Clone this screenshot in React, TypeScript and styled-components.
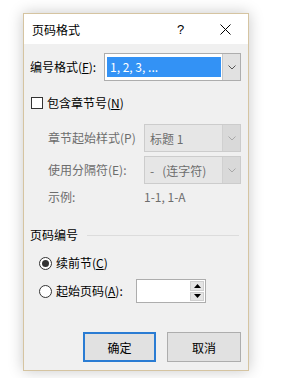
import React from "react";
import styled, { createGlobalStyle } from "styled-components";

const Global = createGlobalStyle`
  html, body { margin: 0; padding: 0; background: #ffffff; }
  body { font-family: "Noto Sans CJK SC", "Noto Sans", sans-serif; font-size: 12px; color: #000; }
  * { box-sizing: border-box; }
`;

const Page = styled.div`
  width: 282px;
  height: 378px;
  padding: 13px 0 0 23px;
`;

const Dialog = styled.div`
  width: 226px;
  height: 358px;
  border: 1px solid #d5c4a1;
  background: #f0f0f0;
  box-shadow: 0 0 14px rgba(0, 0, 0, 0.22);
  display: flex;
  flex-direction: column;
`;

const TitleBar = styled.div`
  height: 30px;
  background: #ffffff;
  display: flex;
  align-items: center;
  padding-left: 8px;
`;

const Title = styled.div`
  flex: 1;
  font-size: 12px;
  line-height: 16px;
  padding-top: 1px;
`;

const TitleButton = styled.div`
  width: 45px;
  height: 30px;
  display: flex;
  align-items: center;
  justify-content: center;
  font-size: 13px;
  font-family: "Liberation Sans", sans-serif;
`;

const Body = styled.div`
  flex: 1;
  display: flex;
  flex-direction: column;
  padding: 0 7px 0 6px;
`;

const Row = styled.div<{ $top: number; $indent?: number; $h?: number }>`
  display: flex;
  align-items: center;
  margin-top: ${(p) => p.$top}px;
  margin-left: ${(p) => p.$indent ?? 0}px;
  height: ${(p) => p.$h ?? 18}px;
`;

const Label = styled.div<{ $w?: number; $disabled?: boolean }>`
  width: ${(p) => (p.$w ? `${p.$w}px` : "auto")};
  flex-shrink: 0;
  color: ${(p) => (p.$disabled ? "#6d6d6d" : "#000")};
  line-height: 16px;
  white-space: nowrap;
`;

const Combo = styled.div<{ $w: number; $disabled?: boolean }>`
  width: ${(p) => p.$w}px;
  height: 28px;
  display: flex;
  border: 1px solid ${(p) => (p.$disabled ? "#cccccc" : "#adadad")};
  background: ${(p) => (p.$disabled ? "#e6e6e6" : "#ffffff")};
`;

const ComboText = styled.div<{ $disabled?: boolean }>`
  flex: 1;
  display: flex;
  align-items: center;
  padding-left: 5px;
  color: ${(p) => (p.$disabled ? "#6d6d6d" : "#000")};
`;

const Selected = styled.div`
  flex: 1;
  margin: 3px 1px 3px 2px;
  background: #3392f5;
  color: #ffffff;
  display: flex;
  align-items: center;
  padding-left: 3px;
  line-height: 16px;
`;

const ComboButton = styled.div<{ $disabled?: boolean }>`
  width: 18px;
  display: flex;
  align-items: center;
  justify-content: center;
  background: ${(p) => (p.$disabled ? "#d9d9d9" : "#e1e1e1")};
  border-left: 1px solid ${(p) => (p.$disabled ? "#d0d0d0" : "#c8c8c8")};
`;

const CheckBox = styled.div`
  width: 12px;
  height: 12px;
  border: 1px solid #333333;
  background: #ffffff;
  margin: 0 4px 0 1px;
`;

const Radio = styled.div<{ $on?: boolean }>`
  width: 13px;
  height: 13px;
  border-radius: 50%;
  border: 1px solid #333333;
  background: #ffffff;
  margin: 0 4px 0 9px;
  display: flex;
  align-items: center;
  justify-content: center;
  &::after {
    content: "";
    width: 7px;
    height: 7px;
    border-radius: 50%;
    background: ${(p) => (p.$on ? "#333333" : "transparent")};
  }
`;

const GroupHeader = styled.div`
  display: flex;
  align-items: center;
  margin-top: 20px;
  height: 18px;
`;

const GroupLine = styled.div`
  flex: 1;
  height: 1px;
  background: #dcdcdc;
  margin: 0 2px 0 9px;
`;

const Spin = styled.div`
  width: 70px;
  height: 24px;
  border: 1px solid #adadad;
  background: #ffffff;
  display: flex;
  justify-content: flex-end;
`;

const SpinButtons = styled.div`
  width: 16px;
  display: flex;
  flex-direction: column;
  padding: 1px;
  gap: 1px;
`;

const SpinBtn = styled.div`
  flex: 1;
  background: #e5e5e5;
  border: 1px solid #cfcfcf;
  display: flex;
  align-items: center;
  justify-content: center;
`;

const Buttons = styled.div`
  display: flex;
  justify-content: flex-end;
  gap: 11px;
  margin-top: 29px;
`;

const Button = styled.div<{ $primary?: boolean }>`
  width: ${(p) => (p.$primary ? 73 : 74)}px;
  height: 30px;
  background: #e1e1e1;
  border: ${(p) => (p.$primary ? "2px solid #2a7cd3" : "1px solid #adadad")};
  display: flex;
  align-items: center;
  justify-content: center;
`;

const Chevron = ({ color }: { color: string }) => (
  <svg width="8" height="5" viewBox="0 0 8 5">
    <path d="M0.5 0.5 L4 4 L7.5 0.5" fill="none" stroke={color} strokeWidth="1" />
  </svg>
);

const Tri = ({ up }: { up?: boolean }) => (
  <svg width="7" height="4" viewBox="0 0 7 4">
    <path d={up ? "M0 4 L3.5 0 L7 4 Z" : "M0 0 L3.5 4 L7 0 Z"} fill="#000" />
  </svg>
);

export default function App() {
  return (
    <>
      <Global />
      <Page>
        <Dialog>
          <TitleBar>
            <Title>页码格式</Title>
            <TitleButton>?</TitleButton>
            <TitleButton>
              <svg width="11" height="11" viewBox="0 0 11 11">
                <path d="M0.5 0.5 L10.5 10.5 M10.5 0.5 L0.5 10.5" stroke="#000" strokeWidth="1" />
              </svg>
            </TitleButton>
          </TitleBar>
          <Body>
            <Row $top={9} $h={28}>
              <Label $w={74}>
                编号格式(<u>F</u>):
              </Label>
              <Combo $w={139}>
                <Selected>1, 2, 3, ...</Selected>
                <ComboButton>
                  <Chevron color="#555" />
                </ComboButton>
              </Combo>
            </Row>
            <Row $top={13}>
              <CheckBox />
              <Label>
                包含章节号(<u>N</u>)
              </Label>
            </Row>
            <Row $top={12} $indent={18} $h={28}>
              <Label $w={96} $disabled>
                章节起始样式(P)
              </Label>
              <Combo $w={97} $disabled>
                <ComboText $disabled>标题 1</ComboText>
                <ComboButton $disabled>
                  <Chevron color="#a8a8a8" />
                </ComboButton>
              </Combo>
            </Row>
            <Row $top={4} $indent={18} $h={28}>
              <Label $w={96} $disabled>
                使用分隔符(E):
              </Label>
              <Combo $w={97} $disabled>
                <ComboText $disabled>-&nbsp;&nbsp;&nbsp;(连字符)</ComboText>
                <ComboButton $disabled>
                  <Chevron color="#a8a8a8" />
                </ComboButton>
              </Combo>
            </Row>
            <Row $top={4} $indent={18}>
              <Label $w={96} $disabled>
                示例:
              </Label>
              <Label $disabled>1-1, 1-A</Label>
            </Row>
            <GroupHeader>
              <Label>页码编号</Label>
              <GroupLine />
            </GroupHeader>
            <Row $top={10}>
              <Radio $on />
              <Label>
                续前节(<u>C</u>)
              </Label>
            </Row>
            <Row $top={7} $h={24}>
              <Radio />
              <Label $w={80}>
                起始页码(<u>A</u>):
              </Label>
              <Spin>
                <SpinButtons>
                  <SpinBtn>
                    <Tri up />
                  </SpinBtn>
                  <SpinBtn>
                    <Tri />
                  </SpinBtn>
                </SpinButtons>
              </Spin>
            </Row>
            <Buttons>
              <Button $primary>确定</Button>
              <Button>取消</Button>
            </Buttons>
          </Body>
        </Dialog>
      </Page>
    </>
  );
}
